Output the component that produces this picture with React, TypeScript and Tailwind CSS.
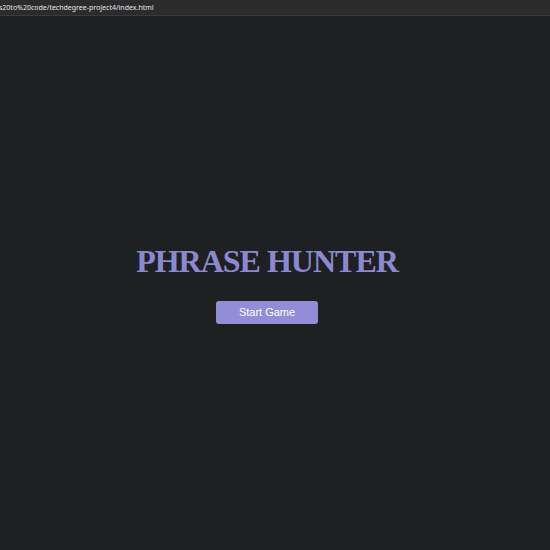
export default function App() {
  return (
    <div className="flex h-[550px] w-[550px] flex-col overflow-hidden bg-[#1f2022]">
      <div className="flex h-[16px] shrink-0 items-center overflow-hidden whitespace-nowrap border-b border-[#3a3c35] bg-[#2b2b2d] font-['Segoe_UI','Noto_Sans',sans-serif] text-[7px] leading-none text-[#e6e6e6]">
        <span className="-ml-[1px]">s20to%20code/techdegree-project4/index.html</span>
      </div>
      <div className="flex flex-1 flex-col items-center pr-[16px] pt-[227px]">
        <h1 className="font-['Liberation_Serif',serif] text-[32px] font-bold leading-[36px] tracking-[-1px] text-[#8c88d2]">
          PHRASE HUNTER
        </h1>
        <button className="mt-[22px] h-[23px] w-[102px] rounded-[3px] bg-[#938cd7] font-['Liberation_Sans',Arial,sans-serif] text-[11px] text-white">
          Start Game
        </button>
      </div>
    </div>
  );
}
